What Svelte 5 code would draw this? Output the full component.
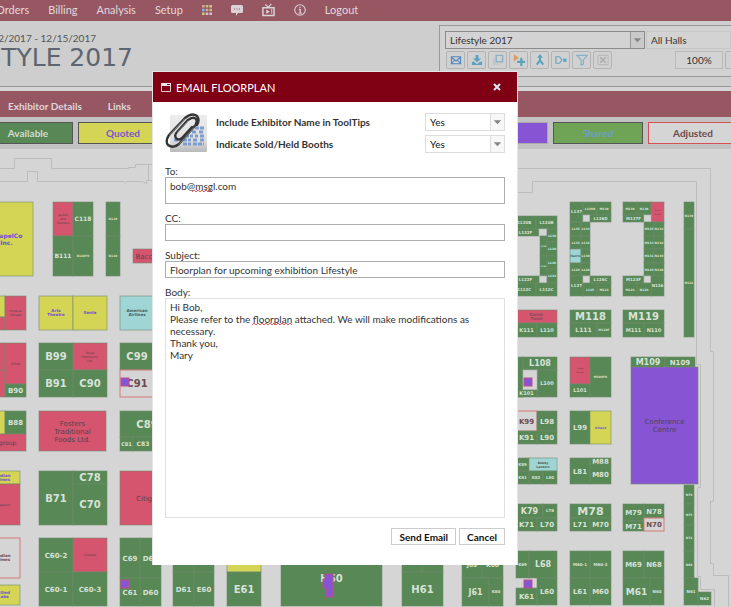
<script>
  const fills = { g: '#578855', r: '#d5546e', y: '#d4d455', c: '#9fd5d5', p: '#8754d4', e: '#d5d5d5', o: '#d5d5d5' };
  const inks = { g: '#d9e2d9', r: '#53444c', y: '#6f4fd0', c: '#3f5a5c', p: '#4b4458', e: '#555', o: '#6e4a50' };

  // x, y, width, height, kind, label lines, text size
  const booths = [
    [-20, 202, 53, 74, 'y', 'ChapelCo|Inc.', 6],
    [53, 202, 20, 34, 'r', 'Jacobs|and|Partners', 3], [73, 202, 20, 34, 'g', 'C118', 6],
    [53, 236, 20, 40, 'g', 'B111', 6], [73, 236, 20, 40, 'g', 'B110F0', 3],
    [106, 202, 14, 34, 'g', 'D119', 3], [106, 236, 14, 40, 'g', 'D110', 3],
    [133, 249, 36, 14, 'r', 'Baccarat', 7],
    [-5, 296, 10, 21, 'y'], [-5, 317, 10, 13, 'r'], [5, 296, 21, 34, 'r', 'Imperial|College', 3],
    [39, 296, 34, 34, 'y', 'Arts|Theatre', 4], [73, 296, 34, 34, 'y', 'Santa', 4],
    [120, 296, 34, 34, 'c', 'American|Airlines', 4],
    [-5, 343, 10, 27, 'r'], [-5, 370, 10, 27, 'r'], [5, 343, 21, 41, 'r', 'Alfred', 3], [5, 384, 21, 13, 'g', 'B90', 7],
    [39, 343, 34, 27, 'g', 'B99', 10], [73, 343, 34, 27, 'r', 'Royal|Mechanics|Ltd.', 3],
    [39, 370, 34, 27, 'g', 'B91', 10], [73, 370, 34, 27, 'g', 'C90', 10],
    [120, 343, 34, 27, 'g', 'C99', 10], [120, 370, 34, 27, 'o', 'C91', 10],
    [-5, 411, 10, 23, 'y'], [5, 411, 21, 23, 'g', 'B88', 7], [-15, 434, 41, 17, 'r', 'Bgroup', 6],
    [39, 411, 67, 40, 'r', 'Fosters|Traditional|Foods Ltd.', 7],
    [120, 411, 54, 26, 'g', 'C89', 10], [120, 437, 13, 14, 'g', 'C81', 5], [133, 437, 20, 14, 'g', 'C83', 6],
    [-13, 471, 33, 13, 'y', 'Indian|Times', 4], [-13, 484, 33, 41, 'r', 'Gazprom', 3],
    [39, 471, 34, 54, 'g', 'B71', 10], [73, 471, 34, 13, 'g', 'C78', 10], [73, 484, 34, 41, 'g', 'C70', 10],
    [120, 471, 64, 54, 'r', 'Citigroup', 7],
    [-13, 538, 33, 40, 'o', 'Indian|Times', 4], [-13, 585, 33, 20, 'y', 'Allied|Labs', 4],
    [39, 538, 34, 34, 'g', 'C60-2', 7], [73, 538, 34, 34, 'r', 'Citibank', 3],
    [39, 572, 34, 34, 'g', 'C60-1', 7], [73, 572, 34, 34, 'g', 'C60-3', 7],
    [120, 538, 20, 40, 'g', 'C69', 7], [140, 538, 21, 40, 'g', 'D68', 7],
    [120, 578, 20, 28, 'g', 'C61', 7], [140, 578, 21, 28, 'g', 'D60', 7],
    [173, 538, 21, 34, 'g'], [194, 538, 20, 34, 'g'], [173, 572, 21, 34, 'g', 'D61', 7], [194, 572, 20, 34, 'g', 'E60', 7],
    [227, 538, 34, 34, 'y'], [227, 572, 34, 34, 'g', 'E61', 10], [281, 550, 101, 56, 'g', 'H60', 10],
    [402, 538, 20, 34, 'g'], [422, 538, 21, 34, 'g'], [402, 572, 41, 34, 'g', 'H61', 10],
    [462, 552, 20, 26, 'g', 'J69', 6], [482, 552, 21, 26, 'g', 'K60', 6],
    [462, 578, 27, 28, 'g', 'J61', 8], [489, 578, 14, 28, 'g', 'K60', 4],

    [512, 216, 24, 13, 'g', 'K120B', 4], [536, 216, 21, 13, 'g', 'L120B', 4], [512, 229, 27, 7, 'g', 'L132F', 4],
    [539, 229, 8, 7, 'e'], [540, 236, 7, 20, 'g', 'L128', 2], [540, 256, 7, 20, 'g', 'L126', 2], [539, 276, 8, 7, 'e'],
    [547, 229, 10, 13, 'g', 'L130', 3], [547, 242, 10, 14, 'g', 'L128', 3], [547, 256, 10, 13, 'g', 'L126', 3], [547, 269, 10, 14, 'g', 'L124', 3],
    [512, 276, 27, 7, 'g', 'L122F', 4], [512, 283, 24, 13, 'g', 'K112C', 4], [536, 283, 21, 13, 'g', 'L112C', 4],

    [570, 202, 13, 20, 'g', 'L137', 4], [583, 202, 14, 13, 'g', 'L139B', 3], [597, 202, 14, 13, 'g', 'M138', 3],
    [583, 215, 7, 7, 'e'], [590, 215, 21, 7, 'g', 'L136D', 4],
    [570, 222, 11, 14, 'g', 'L135', 3], [581, 222, 9, 14, 'g', 'L134', 3], [570, 236, 11, 13, 'g', 'L133', 3], [581, 236, 9, 13, 'g', 'L132', 3],
    [570, 249, 11, 14, 'c', 'Harris', 3], [581, 249, 9, 14, 'g', 'L130', 3], [570, 263, 11, 13, 'g', 'L129', 3], [581, 263, 9, 13, 'g', 'L128', 3],
    [570, 276, 13, 20, 'g', 'L127', 4], [583, 276, 7, 7, 'e'], [590, 276, 21, 7, 'g', 'L126C', 4],
    [583, 283, 14, 13, 'g', 'L125', 3], [597, 283, 14, 13, 'g', 'M124', 3],

    [623, 202, 14, 13, 'g', 'M139', 3], [637, 202, 14, 13, 'g', 'N138', 3], [651, 202, 13, 20, 'r', 'Smart|Travel', 2],
    [623, 215, 21, 7, 'g', 'M137F', 4], [644, 215, 7, 7, 'e'],
    [644, 222, 10, 14, 'g', 'M135', 3], [654, 222, 10, 14, 'g', 'N134', 3], [644, 236, 10, 13, 'g', 'M133', 3], [654, 236, 10, 13, 'g', 'N132', 3],
    [644, 249, 10, 14, 'g', 'M131', 3], [654, 249, 10, 14, 'g', 'N130', 3], [644, 263, 10, 13, 'g', 'M129', 3], [654, 263, 10, 13, 'g', 'N128', 3],
    [623, 276, 21, 7, 'g', 'M123F', 4], [644, 276, 7, 7, 'e'], [651, 276, 13, 20, 'g', 'N126', 4],
    [623, 283, 14, 13, 'g', 'M121', 3], [637, 283, 14, 13, 'g', 'N120', 3],
    [684, 202, 10, 27, 'g', 'N139', 3], [684, 229, 10, 108, 'g', 'N121', 3],

    [516, 310, 41, 13, 'r', 'Danish|Travel', 4], [516, 323, 21, 14, 'g', 'K111', 5], [537, 323, 20, 14, 'g', 'L110', 5],
    [570, 310, 41, 13, 'g', 'M118', 10], [570, 323, 27, 14, 'g', 'L111', 6], [597, 323, 14, 14, 'g', 'M110F', 3],
    [623, 310, 41, 13, 'g', 'M119', 10], [623, 323, 21, 14, 'g', 'M111', 5], [644, 323, 20, 14, 'g', 'N110', 5],
    [516, 357, 7, 40, 'g'], [523, 357, 34, 13, 'g', 'L108', 8], [537, 370, 20, 27, 'g', 'L100', 5],
    [523, 370, 14, 20, 'e'], [516, 390, 21, 7, 'g', 'K101', 5],
    [570, 357, 20, 27, 'r', 'United|Airlines', 2], [570, 384, 20, 13, 'g', 'L101', 5], [590, 357, 21, 40, 'g', 'M100F0', 3],
    [631, 357, 34, 10, 'g', 'M109', 8], [665, 357, 30, 10, 'g', 'N109', 7], [631, 367, 67, 117, 'p', 'Conference|Centre', 7],
    [516, 411, 21, 20, 'o', 'K99', 7], [537, 411, 20, 20, 'g', 'L98', 7], [516, 431, 21, 13, 'g', 'K91', 7], [537, 431, 20, 13, 'g', 'L90', 7],
    [570, 411, 20, 33, 'g', 'L99', 7], [590, 411, 21, 33, 'y', 'Allianz', 3],
    [516, 458, 13, 13, 'g', 'K89', 4], [529, 458, 28, 13, 'c', 'Bobby|Landers', 3],
    [516, 471, 13, 13, 'g', 'K81', 4], [529, 471, 14, 13, 'g', 'K82', 4], [543, 471, 14, 13, 'g', 'L80', 4],
    [570, 458, 20, 26, 'g', 'L81', 7], [590, 458, 21, 6, 'g', 'M88', 7], [590, 464, 21, 20, 'g', 'M80', 7],
    [516, 504, 27, 14, 'g', 'K79', 8], [543, 504, 14, 14, 'g', 'L78', 4], [516, 518, 21, 13, 'g', 'K71', 7], [537, 518, 20, 13, 'g', 'L70', 7],
    [570, 504, 41, 14, 'g', 'M78', 11], [570, 518, 20, 13, 'g', 'L71', 7], [590, 518, 21, 13, 'g', 'M70', 7],
    [623, 504, 21, 17, 'g', 'M79', 7], [623, 521, 21, 10, 'g', 'M71', 7], [644, 504, 20, 14, 'g', 'N78', 7], [644, 518, 20, 13, 'o', 'N70', 7],
    [516, 551, 13, 27, 'g', 'K69', 4], [529, 551, 28, 27, 'g', 'L68', 8], [516, 588, 21, 17, 'g', 'K61', 7], [537, 578, 20, 27, 'g', 'L60', 7],
    [570, 551, 20, 27, 'g', 'M60-1', 4], [590, 551, 21, 27, 'g', 'M60-2', 4], [570, 578, 20, 27, 'g', 'L61', 7], [590, 578, 21, 27, 'g', 'M60', 7],
    [623, 551, 21, 27, 'g', 'M69', 7], [644, 551, 20, 27, 'g', 'N68', 7], [623, 578, 27, 27, 'g', 'M61', 9], [650, 578, 14, 27, 'g', 'N60', 4],
    [684, 485, 10, 19, 'g', 'N79', 3], [684, 504, 10, 21, 'g', 'N75', 3], [684, 525, 10, 26, 'g', 'N71', 3], [684, 551, 10, 27, 'g', 'N69', 3],
    [684, 578, 14, 27, 'g', 'N61', 4], [698, 592, 13, 13, 'g', 'N62', 4]
  ].map(([x, y, w, h, kind, label = '', size = 4]) => {
    const lines = label ? label.split('|') : [];
    const step = size < 5 ? 4 : size + 1;
    return { x, y, w, h, kind, lines, size, step, top: y + h / 2 - ((lines.length - 1) * step) / 2 + size * 0.36 };
  });

  const markers = [[121, 378], [121, 580], [524, 378], [524, 580]];

  let toolTips = $state('Yes');
  let held = $state('Yes');
  let to = $state('bob@msgl.com');
  let cc = $state('');
  let subject = $state('Floorplan for upcoming exhibition Lifestyle');
  let body = $state('Hi Bob,\nPlease refer to the floorplan attached. We will make modifications as necessary.\nThank you,\nMary');
  let open = $state(true);
</script>

{#snippet arrow()}
  <svg class="arrow" viewBox="0 0 14 16" aria-hidden="true"><path d="M3 6h8L7 10.500z" fill="#858585" /></svg>
{/snippet}

<main>
  <nav class="top">
    <a href="#orders">Orders</a><a href="#billing">Billing</a><a href="#analysis">Analysis</a><a href="#setup">Setup</a>
    <a href="#apps" class="icon" aria-label="Apps">
      <svg width="10" height="10" viewBox="0 0 10 10">
        <path d="M0 0h2.600v2.600H0zM3.700 3.700h2.600v2.600H3.700z" fill="#dca39b" /><path d="M3.700 0h2.600v2.600H3.700zM7.400 3.700H10v2.600H7.400z" fill="#b8c879" /><path d="M7.400 0H10v2.600H7.400zM0 7.400h2.600V10H0z" fill="#d8c778" /><path d="M0 3.700h2.600v2.600H0z" fill="#7fb5d8" /><path d="M3.700 7.400h2.600V10H3.700zM7.400 7.400H10V10H7.400z" fill="#c8c4ce" />
      </svg>
    </a>
    <a href="#chat" class="icon" aria-label="Messages">
      <svg width="12" height="12" viewBox="0 0 12 12"><path d="M1.500 1h9Q12 1 12 2.500v5Q12 9 10.500 9H7l-2 3V9H1.500Q0 9 0 7.500v-5Q0 1 1.500 1z" fill="#d9d3d5" /><path d="M3 5h1M5.500 5h1M8 5h1" stroke="#965662" /></svg>
    </a>
    <a href="#tv" class="icon" aria-label="Videos">
      <svg width="13" height="14" viewBox="0 0 14 14"><path d="M1 4.500h12v8.500H1z" fill="none" stroke="#d9d3d5" stroke-width="1.600" /><path d="M3.500 1l3.500 3 3-3.500" fill="none" stroke="#d9d3d5" stroke-width="1.300" /><path d="M4.500 6.500v4.500l4-2.250z" fill="#d9d3d5" /><path d="M10.500 6v5" stroke="#d9d3d5" /></svg>
    </a>
    <a href="#info" class="icon" aria-label="Information">
      <svg width="12" height="12" viewBox="0 0 13 13"><circle cx="6.500" cy="6.500" r="5.700" fill="none" stroke="#d9d3d5" stroke-width="1.200" /><path d="M6.500 3v1.600M5.200 6h1.500v3.800M5 9.800h3.200" fill="none" stroke="#d9d3d5" stroke-width="1.300" /></svg>
    </a>
    <a href="#logout">Logout</a>
  </nav>

  <header>
    <div class="heading">
      <p>12/12/2017 - 12/15/2017</p>
      <h1>LIFESTYLE 2017</h1>
    </div>
    <div class="panel">
      <div class="row">
        <div class="combo event">
          <select aria-label="Exhibition"><option>Lifestyle 2017</option></select>
          {@render arrow()}
        </div>
        <select class="halls" aria-label="Hall"><option>All Halls</option></select>
      </div>
      <div class="row tools">
        <button aria-label="Email floorplan"><svg viewBox="0 0 13 13"><path d="M1.500 3h10v7.500h-10zM1.500 3.500l5 4 5-4M1.500 10.500l3.500-4M11.500 10.500l-3.500-4" fill="none" stroke="#5487bf" stroke-width="1.200" /></svg></button>
        <button aria-label="Download"><svg viewBox="0 0 13 13"><path d="M5 1h3v4h3L6.500 9 2 5h3z" fill="#5ba2bd" /><path d="M1 8.500v3.500h11V8.500H9.500L6.500 11 3.500 8.500z" fill="#5ba2bd" /></svg></button>
        <button aria-label="Copy"><svg viewBox="0 0 13 13"><path d="M4.500 1.500h7v7h-7z" fill="none" stroke="#8ab4c6" stroke-width="1.600" /><path d="M1 5v7h7v-2H3V5z" fill="#bcc6ca" /></svg></button>
        <button aria-label="Move"><svg viewBox="0 0 13 13"><path d="M1 0l5.500 5L4 5.500 1 8.500z" fill="#db9a5e" /><path d="M9 4v9M4.500 8.500h9" stroke="#5ba2bd" stroke-width="2.400" /></svg></button>
        <button aria-label="Merge"><svg viewBox="0 0 13 13"><path d="M6.500 3v4L3 11.500M6.500 7l3.500 4.500" fill="none" stroke="#5ba2bd" stroke-width="2.200" /><path d="M3.500 4L6.500 0l3 4z" fill="#5ba2bd" /></svg></button>
        <button aria-label="Split"><svg viewBox="0 0 13 13"><path d="M1 3h4l2.500 3.500L5 10H1z" fill="none" stroke="#6ca7be" stroke-width="1.300" /><path d="M9 5h3.500v3.500H9z" fill="#5ba2bd" /></svg></button>
        <button aria-label="Filter"><svg viewBox="0 0 13 13"><path d="M1 1.500h11L8 6.500V11L5.500 12V6.500z" fill="none" stroke="#82b3c6" stroke-width="1.300" /></svg></button>
        <button aria-label="Clear"><svg viewBox="0 0 13 13"><path d="M1 1.500h11v10H1z" fill="none" stroke="#b5b5b5" /><path d="M3.500 3.500l6 6M9.500 3.500l-6 6" stroke="#ababab" stroke-width="1.800" /></svg></button>
        <input class="zoom" aria-label="Zoom" value="100%" />
        <button aria-label="Zoom in"></button>
      </div>
    </div>
  </header>

  <nav class="sub"><a href="#details">Exhibitor Details</a><a href="#links">Links</a></nav>

  <div class="legend">
    <span class="available">Available</span><span class="quoted">Quoted</span><span></span><span></span><span></span><span class="purple"></span><span class="shared">Shared</span><span class="adjusted">Adjusted</span>
  </div>

  <svg class="plan" role="img" aria-label="Floorplan">
    <g transform="translate(0 -149)">
      <g fill="none" stroke="#bcbcbc" stroke-width="1">
        <path d="M0 168.500H14.500V158.500H51.500V168.500H128.500V167.500H135.500V164.500H153M0 181.500H27.500V171.500H37.500V181.500H123l2 1 2-1H142.500l4 2V180.500H153M148.500 164V181" />
        <path d="M518 192.500H532.500V181.500H696.500V364.500H700.500V487.500H697.500V576.500H700.500V589.500H714.500V607" />
        <path d="M518 168.500H710.500V351.500H713.500V501.500H710.500V563.500H713.500V575.500H728.500V607" />
      </g>
      {#each booths as b}
        <rect x={b.x} y={b.y} width={b.w} height={b.h} fill={fills[b.kind]} class="booth {b.kind}" />
        {#each b.lines as line, i}
          <text x={b.x + b.w / 2} y={b.top + i * b.step} font-size={b.size} fill={inks[b.kind]} class={b.kind}>{line}</text>
        {/each}
      {/each}
      {#each markers as [x, y]}
        <rect {x} {y} width="8" height="8" fill="#8754d4" stroke="#bf4f83" />
      {/each}
      <path d="M325 574h8v23h-7v-9h-3v-9h2z" fill="#8754d4" stroke="#bf4f83" />
    </g>
  </svg>
</main>

{#if open}
  <div class="dialog" role="dialog" aria-labelledby="dialog-title">
    <div class="title">
      <svg width="10" height="9" viewBox="0 0 10 9" aria-hidden="true"><path d="M.5.500h9v8h-9z" fill="none" stroke="#e8c9cf" /><path d="M0 0h10v3H0z" fill="#f4e5e8" /><path d="M6 1.500h3" stroke="#800014" /></svg>
      <h2 id="dialog-title">EMAIL FLOORPLAN</h2>
      <button aria-label="Close" onclick={() => (open = false)}><svg width="8" height="8" viewBox="0 0 8 8"><path d="M1 1l6 6M7 1L1 7" stroke="#dbe9f5" stroke-width="2" /></svg></button>
    </div>
    <form onsubmit={(e) => e.preventDefault()}>
      <div class="options">
        <svg class="clip" width="44" height="40" viewBox="0 0 44 40" aria-hidden="true">
          <defs><linearGradient id="card" x1="0" y1="0" x2="0" y2="1"><stop offset="0" stop-color="#ededed" /><stop offset=".7" stop-color="#dedede" /><stop offset="1" stop-color="#b9b9b9" /></linearGradient></defs>
          <rect x="5" y="2" width="37" height="37" rx="1" fill="url(#card)" />
          <path d="M30 15h9M27 19h5M34 19h5M20 23h8M30 23h3M35 23h4M9 27h6M18 27h8M28 27h5M35 27h4M18 31h8M28 31h11" stroke="#7d9dd2" stroke-width="3" stroke-dasharray="4 1" />
          <path d="M27 14L17 25Q13 28 11 25 9 22 12 19L23 7Q28 3 31 6 33 9 29 14L14 31Q8 36 3 32 0 28 4 22L20 5Q27-1 32 3 35 7 32 12" fill="none" stroke="#343638" stroke-width="2.400" stroke-linecap="round" />
          <path d="M4.500 22L20 5.500M12.500 19.500L23.500 7.500M14 31.500L29 14.500" fill="none" stroke="#a5a8aa" stroke-width=".7" />
        </svg>
        <label for="tips">Include Exhibitor Name in ToolTips</label>
        <div class="combo light">
          <select id="tips" bind:value={toolTips}><option>Yes</option><option>No</option></select>
          {@render arrow()}
        </div>
        <label for="held">Indicate Sold/Held Booths</label>
        <div class="combo light">
          <select id="held" bind:value={held}><option>Yes</option><option>No</option></select>
          {@render arrow()}
        </div>
      </div>
      <div class="field">
        <label for="to">To:</label>
        <textarea id="to" class="to" bind:value={to} spellcheck="false"></textarea>
        <svg class="wave wave-to" aria-hidden="true"><path d="M0 2l2-2 2 2 2-2 2 2 2-2 2 2 2-2 2 2 2-2 2 2" /></svg>
      </div>
      <div class="field">
        <label for="cc">CC:</label>
        <input id="cc" bind:value={cc} />
      </div>
      <div class="field">
        <label for="subject">Subject:</label>
        <input id="subject" bind:value={subject} />
      </div>
      <div class="field">
        <label for="body">Body:</label>
        <textarea id="body" class="body" bind:value={body} spellcheck="false"></textarea>
        <svg class="wave wave-body" aria-hidden="true"><path d="M0 2l2-2 2 2 2-2 2 2 2-2 2 2 2-2 2 2 2-2 2 2 2-2 2 2 2-2 2 2 2-2 2 2 2-2 2 2 2-2 2 2" /></svg>
      </div>
      <div class="actions"><button>Send Email</button><button type="button" onclick={() => (open = false)}>Cancel</button></div>
    </form>
  </div>
{/if}

<style>
  :global(body) { background: #d5d5d5; }
  :global(html) { overflow: hidden; }
  main, .dialog { font-family: Lato, 'Noto Sans', sans-serif; font-size: 10px; color: #333; }
  main { position: relative; overflow: hidden; }
  * { box-sizing: border-box; }
  a { color: inherit; text-decoration: none; }
  button, input, select, textarea { font: inherit; color: inherit; border-radius: 0; margin: 0; appearance: none; outline: none; }

  .top { display: flex; align-items: center; gap: 19px; height: 21px; margin-left: -4px; padding-bottom: 2px; background: #965662; color: #e0dadc; font-size: 11px; white-space: nowrap; }
  .icon { display: flex; }

  header { display: flex; justify-content: space-between; height: 66px; background: #cecece; border-bottom: 1px solid #999; }
  .heading { width: 133px; padding-top: 11px; white-space: nowrap; }
  .heading p, .heading h1 { display: flex; justify-content: flex-end; margin: 0; }
  .heading p { width: 96px; line-height: 13px; color: #555; }
  .heading h1 { font: 25px/26px 'DejaVu Sans', sans-serif; color: #5f6570; }
  .panel { width: 292px; height: 52px; margin-top: 4px; padding: 5px 0 0 5px; border: 1px solid #999; border-right: 0; background: #d2d2d2; }
  .row { display: flex; gap: 1px; }
  .combo { position: relative; display: flex; }
  .combo select { width: 100%; border: 1px solid #8b8b8b; background: #d3d3d3; padding: 0 4px; height: 18px; }
  .arrow { position: absolute; right: 1px; top: 1px; width: 14px; height: 16px; border-left: 1px solid #999; background: #c9c9c9; }
  .event { width: 200px; flex: none; }
  .halls { flex: 1; min-width: 0; height: 18px; border: 1px solid #c6c6c6; background: #d3d3d3; padding: 0 4px; }
  .tools { margin-top: 2px; gap: 2px; padding-left: 1px; }
  .tools button { display: grid; place-items: center; flex: none; width: 19px; height: 18px; padding: 0; border: 1px solid #b3b3b3; border-radius: 2px; background: #d1d1d1; }
  .tools button svg { width: 12px; height: 12px; }
  .zoom { width: 48px; height: 18px; margin-left: 61px; padding: 0; flex: none; text-align: center; border: 1px solid #bababa; background: #d3d3d3; }

  .sub { display: flex; align-items: center; gap: 26px; height: 26px; margin-top: 4px; padding: 3px 8px 0; background: #965662; color: #ded7d9; font-weight: 700; }
  .legend { display: flex; gap: 5px; height: 32px; padding: 5px 0; margin-left: -17px; background: #c2c2c2; font-weight: 700; }
  .legend span { display: grid; place-items: center; flex: none; width: 90px; height: 22px; border: 1px solid #555; }
  .available { background: #578855; color: #d2ddd2; }
  .quoted { background: #d4d455; color: #7a55cb; }
  .legend .purple { background: #8754d4; border-color: #aaa; }
  .shared { background: #6fa355; color: #6b9fc4; }
  .legend .adjusted { background: #d5d5d5; border-color: #d45054; color: #6b4a4d; }

  .plan { display: block; width: 100%; height: 458px; background: #d5d5d5; }
  .booth { stroke: #728e70; stroke-width: 1; stroke-opacity: 0.6; }
  .booth.o { stroke: #d57a7a; stroke-opacity: 1; }
  .booth.e { stroke: #b5b5b5; }
  .plan text { font-family: 'DejaVu Sans', sans-serif; font-weight: 700; text-anchor: middle; }
  .plan text.r, .plan text.p { font-weight: 400; }

  .dialog { position: absolute; top: 71px; left: 152px; width: 366px; background: #fff; border: 1px solid #e4e4e4; border-bottom: 0; }
  .title { display: flex; align-items: center; height: 30px; padding: 0 16px 0 8px; gap: 5px; background: #800014; color: #fff; }
  .title h2 { flex: 1; margin: 0; font-size: 11px; font-weight: 400; }
  .title button { display: flex; padding: 0; border: 0; background: none; }
  form { padding: 11px 12px 20px; }
  .options { display: grid; grid-template-columns: 44px 1fr 80px; column-gap: 7px; row-gap: 4px; align-items: center; margin-bottom: 12px; font-weight: 700; }
  .options .clip { grid-row: span 2; }
  .light select { border-color: #ddd; background: #fff; font-weight: 400; color: #111; }
  .light .arrow { border-color: #ddd; background: #f7f7f7; }
  .field { position: relative; display: flex; flex-direction: column; margin-bottom: 8px; }
  .field label { line-height: 12px; }
  .field input, .field textarea { width: 100%; border: 1px solid #adadad; padding: 0 4px; background: #fff; line-height: 12px; resize: none; overflow: hidden; }
  .field input { height: 17px; }
  .field .to { height: 27px; padding-top: 2px; }
  .field .body { height: 220px; padding-top: 2px; border-color: #e0e0e0; }
  .wave { position: absolute; height: 3px; fill: none; stroke: #e06060; }
  .wave-to { top: 25px; left: 27px; width: 19px; }
  .wave-body { top: 37px; left: 87px; width: 40px; }
  .actions { display: flex; justify-content: flex-end; gap: 3px; margin-top: 10px; }
  .actions button { height: 17px; padding: 0 7px; border: 1px solid #ccc; background: #fff; font-weight: 700; color: #111; line-height: 12px; }
</style>
